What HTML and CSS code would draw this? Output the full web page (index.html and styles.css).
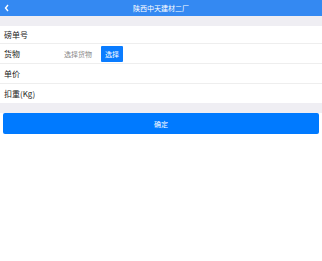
FILE: index.html
```html
<!DOCTYPE html>
<html lang="zh">
<head>
    <meta charset="UTF-8">
    <meta name="viewport" content="width=device-width, initial-scale=1.0">
    <title>磅单</title>
    <link rel="stylesheet" href="styles.css">
</head>
<body>
    <header class="topbar">
        <svg class="back" width="5" height="8" viewBox="0 0 5 8">
            <path d="M4 1 L1.5 4 L4 7" fill="none" stroke="#fff" stroke-width="1.4"/>
        </svg>
        <h1>陕西中天建材二厂</h1>
    </header>

    <div class="gap"></div>

    <section class="form">
        <div class="row">
            <span class="label">磅单号</span>
        </div>
        <div class="row">
            <span class="label">货物</span>
            <span class="placeholder">选择货物</span>
            <button class="pickBtn">选择</button>
        </div>
        <div class="row">
            <span class="label">单价</span>
        </div>
        <div class="row">
            <span class="label">扣重(Kg)</span>
        </div>
    </section>

    <div class="footer">
        <button class="okBtn">确定</button>
    </div>
</body>
</html>
```
FILE: styles.css
```css
/* page */
body {
    font-family: "Noto Sans CJK SC", "Liberation Sans", sans-serif;
    margin: 0;
    padding: 0;
    background-color: #fff;
}

.topbar {
    height: 16px;
    background-color: #3489f2;
    color: #fff;
    display: flex;
    align-items: center;
    justify-content: center;
    position: relative;
}

.topbar h1 {
    font-size: 7px;
    font-weight: normal;
    margin: 0;
}

.back {
    position: absolute;
    left: 4px;
    top: 4px;
}

.gap {
    height: 10px;
    background-color: #efeef3;
}

/* rows */
.form {
    background-color: #fff;
}

.row {
    display: flex;
    align-items: center;
    height: 19px;
    padding-left: 4px;
    border-bottom: 1px solid #eeeeee;
    font-size: 8px;
    color: #222;
}

.row:first-child {
    height: 17px;
}

.row:last-child {
    border-bottom: none;
}

.label {
    width: 60px;
}

.placeholder {
    color: #888;
    font-size: 7px;
    width: 37px;
}

.pickBtn {
    background-color: #0a7cff;
    color: #fff;
    border: none;
    font-family: inherit;
    font-size: 7px;
    width: 22px;
    height: 16px;
    padding: 0;
    border-radius: 1px;
}

/* bottom button */
.footer {
    background: linear-gradient(#efeef3 0, #efeef3 10px, #fff 10px);
    padding: 10px 3px 0 3px;
}

.okBtn {
    display: block;
    width: 100%;
    height: 21px;
    background-color: #007aff;
    color: #fff;
    border: none;
    font-family: inherit;
    font-size: 7px;
    border-radius: 2px;
}
```
